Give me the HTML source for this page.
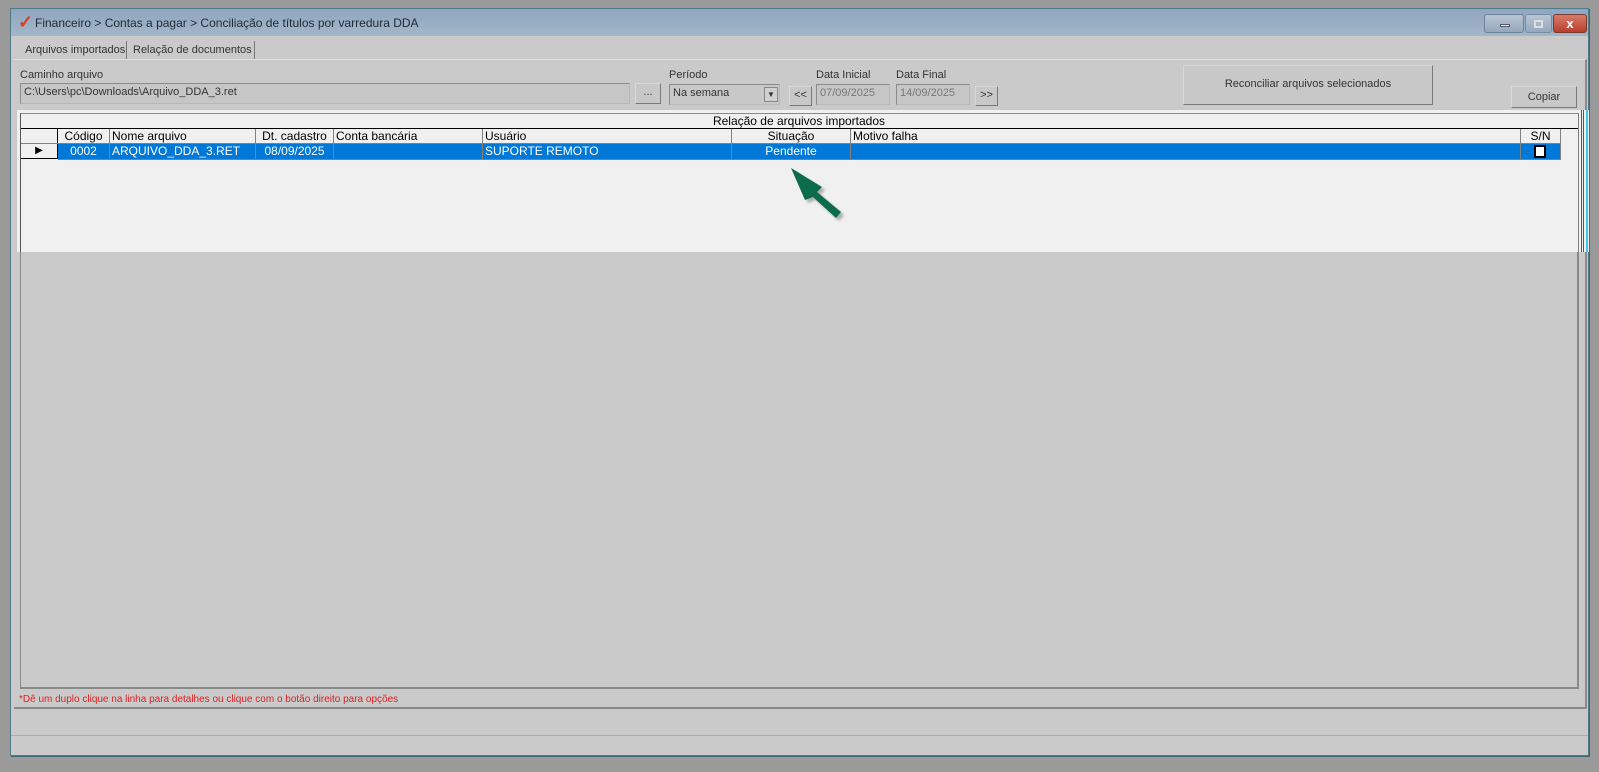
<!DOCTYPE html>
<html><head><meta charset="utf-8"><style>
*{box-sizing:border-box;margin:0;padding:0}
body{width:1599px;height:772px;background:#9a9a9a;position:relative;overflow:hidden;font-family:"Liberation Sans",sans-serif;font-size:11px;color:#333}
.a{position:absolute}
.t{position:absolute;white-space:nowrap}
.inp{position:absolute;background:#c6c6c6;border:1px solid #8c8c8c;border-right-color:#b8b8b8;border-bottom-color:#b8b8b8;padding:2px 3px;font-size:11px;color:#333}
.btn{position:absolute;background:#c8c8c8;border:1px solid #d8d8d8;border-right-color:#7a7a7a;border-bottom-color:#7a7a7a;text-align:center;font-size:11px;color:#333}
.grid .c{position:absolute;top:0;height:15px;border-right:1px solid #808080;line-height:14px;padding:0 2px;white-space:nowrap;font-size:12px}
</style></head><body>
<div class="a" style="left:10px;top:8px;width:1579px;height:748px;background:#cacaca;border:1px solid #4f7a8c;box-shadow:1px 1px 0 #3c6a7a"></div>
<div class="a" style="left:11px;top:9px;width:1577px;height:27px;background:linear-gradient(#8ea6bf,#a4b6c8)"></div>
<div class="t" style="left:18px;top:12px;color:#d84020;font-size:18px;font-weight:bold">&#10003;</div>
<div class="t" style="left:35px;top:16px;font-size:12px;color:#1e2a36">Financeiro &gt; Contas a pagar &gt; Conciliação de títulos por varredura DDA</div>
<div class="a" style="left:1484px;top:14px;width:40px;height:19px;border:1px solid #6d8197;border-radius:3px;background:linear-gradient(#b8c6d4,#95a8bc)"><div class="a" style="left:15px;top:9px;width:10px;height:3px;background:#eee;border:1px solid #556"></div></div>
<div class="a" style="left:1525px;top:14px;width:27px;height:19px;border:1px solid #7a8ca0;border-radius:3px;background:linear-gradient(#b8c6d4,#95a8bc)"><div class="a" style="left:8px;top:5px;width:9px;height:8px;border:2px solid #ddd"></div></div>
<div class="a" style="left:1553px;top:14px;width:34px;height:19px;border:1px solid #7a3a30;border-radius:3px;background:linear-gradient(#d87a68,#b8402c);color:#fff;font-weight:bold;text-align:center;line-height:17px;font-size:13px">x</div>
<div class="t" style="left:25px;top:44px;color:#333">Arquivos importados</div>
<div class="a" style="left:126px;top:41px;width:1px;height:18px;background:#777"></div>
<div class="t" style="left:133px;top:44px;color:#333">Relação de documentos</div>
<div class="a" style="left:254px;top:41px;width:1px;height:18px;background:#777"></div>
<div class="a" style="left:14px;top:59px;width:1573px;height:650px;border-top:1px solid #e0e0e0;border-right:2px solid #8a8a8a;border-bottom:2px solid #8a8a8a"></div>
<div class="t" style="left:20px;top:69px">Caminho arquivo</div>
<div class="inp" style="left:20px;top:83px;width:610px;height:21px">C:\Users\pc\Downloads\Arquivo_DDA_3.ret</div>
<div class="btn" style="left:635px;top:83px;width:26px;height:21px;line-height:16px">...</div>
<div class="t" style="left:669px;top:69px">Período</div>
<div class="inp" style="left:669px;top:84px;width:111px;height:21px;background:#c8c8c8">Na semana<div class="a" style="right:1px;top:2px;width:14px;height:15px;background:#d0d0d0;border:1px solid #888;font-size:8px;text-align:center;line-height:13px">▼</div></div>
<div class="btn" style="left:789px;top:86px;width:23px;height:20px;line-height:17px">&lt;&lt;</div>
<div class="t" style="left:816px;top:69px">Data Inicial</div>
<div class="inp" style="left:816px;top:84px;width:74px;height:21px;color:#777">07/09/2025</div>
<div class="t" style="left:896px;top:69px">Data Final</div>
<div class="inp" style="left:896px;top:84px;width:74px;height:21px;color:#777">14/09/2025</div>
<div class="btn" style="left:975px;top:86px;width:23px;height:20px;line-height:17px">&gt;&gt;</div>
<div class="btn" style="left:1183px;top:65px;width:250px;height:40px;line-height:37px">Reconciliar arquivos selecionados</div>
<div class="btn" style="left:1511px;top:86px;width:66px;height:22px;line-height:20px">Copiar</div>
<div class="a" style="left:20px;top:252px;width:1559px;height:437px;border-left:1px solid #8a8a8a;border-right:2px solid #8a8a8a;border-bottom:2px solid #8a8a8a"></div>
<div class="a" style="left:17px;top:110px;width:1572px;height:142px;background:#f0f0f0"></div>
<div class="a" style="left:1581px;top:110px;width:1px;height:142px;background:#555"></div>
<div class="a" style="left:1583px;top:110px;width:1px;height:142px;background:#555"></div>
<div class="a" style="left:1586px;top:110px;width:2px;height:142px;background:#3cc8ee"></div>
<div class="a" style="left:20px;top:113px;width:1559px;height:139px;border-left:1px solid #555;border-top:1px solid #888;border-right:1px solid #808080"></div>
<div class="t" style="left:20px;top:114px;width:1558px;text-align:center;font-size:12px;color:#000">Relação de arquivos importados</div>
<div class="grid a" style="left:21px;top:128px;width:1557px;height:16px;border-top:1px solid #000;color:#000">
<div class="c" style="left:0;width:37px;border-right-color:#000;border-bottom:1px solid #000"></div>
<div class="c" style="left:37px;width:52px;text-align:center">Código</div>
<div class="c" style="left:89px;width:146px">Nome arquivo</div>
<div class="c" style="left:235px;width:78px;text-align:center">Dt. cadastro</div>
<div class="c" style="left:313px;width:149px">Conta bancária</div>
<div class="c" style="left:462px;width:249px">Usuário</div>
<div class="c" style="left:711px;width:119px;text-align:center">Situação</div>
<div class="c" style="left:830px;width:670px">Motivo falha</div>
<div class="c" style="left:1500px;width:40px;text-align:center">S/N</div>
</div>
<div class="grid a" style="left:21px;top:143px;width:1540px;height:16px;color:#fff;border-top:1px solid #808080">
<div class="c" style="left:0;width:37px;background:#f0f0f0;border-right-color:#000;border-bottom:1px solid #000;color:#000;font-size:10px;text-align:center">&#9654;</div>
<div class="c" style="left:37px;width:52px;text-align:center;background:#0078d7;border-bottom:1px solid #808080;height:16px">0002</div>
<div class="c" style="left:89px;width:146px;background:#0078d7;border-bottom:1px solid #808080;height:16px">ARQUIVO_DDA_3.RET</div>
<div class="c" style="left:235px;width:78px;text-align:center;background:#0078d7;border-bottom:1px solid #808080;height:16px">08/09/2025</div>
<div class="c" style="left:313px;width:149px;background:#0078d7;border-bottom:1px solid #808080;height:16px"></div>
<div class="c" style="left:462px;width:249px;background:#0078d7;border-bottom:1px solid #808080;height:16px">SUPORTE REMOTO</div>
<div class="c" style="left:711px;width:119px;text-align:center;background:#0078d7;border-bottom:1px solid #808080;height:16px">Pendente</div>
<div class="c" style="left:830px;width:670px;background:#0078d7;border-bottom:1px solid #808080;height:16px"></div>
<div class="c" style="left:1500px;width:40px;background:#0078d7;border-bottom:1px solid #808080;height:16px"><div class="a" style="left:13px;top:1px;width:12px;height:13px;background:#fff;border:2px solid #000"></div></div>
</div>
<svg class="a" style="left:780px;top:160px" width="70" height="70" viewBox="780 160 70 70">
<defs><filter id="b"><feGaussianBlur stdDeviation="1.2"/></filter></defs>
<path d="M791 168 L822 187 L817 192 L841 212 L836 218 L813 197 L805 200 Z" fill="#777" opacity=".55" filter="url(#b)" transform="translate(3,3)"/>
<path d="M791 168 L822 187 L817 192 L841 212 L836 218 L813 197 L805 200 Z" fill="#0b6b4a"/>
</svg>
<div class="t" style="left:19px;top:694px;color:#e02020;font-size:10px">*Dê um duplo clique na linha para detalhes ou clique com o botão direito para opções</div>
<div class="a" style="left:11px;top:735px;width:1577px;height:1px;background:#aaa"></div>
</body></html>
